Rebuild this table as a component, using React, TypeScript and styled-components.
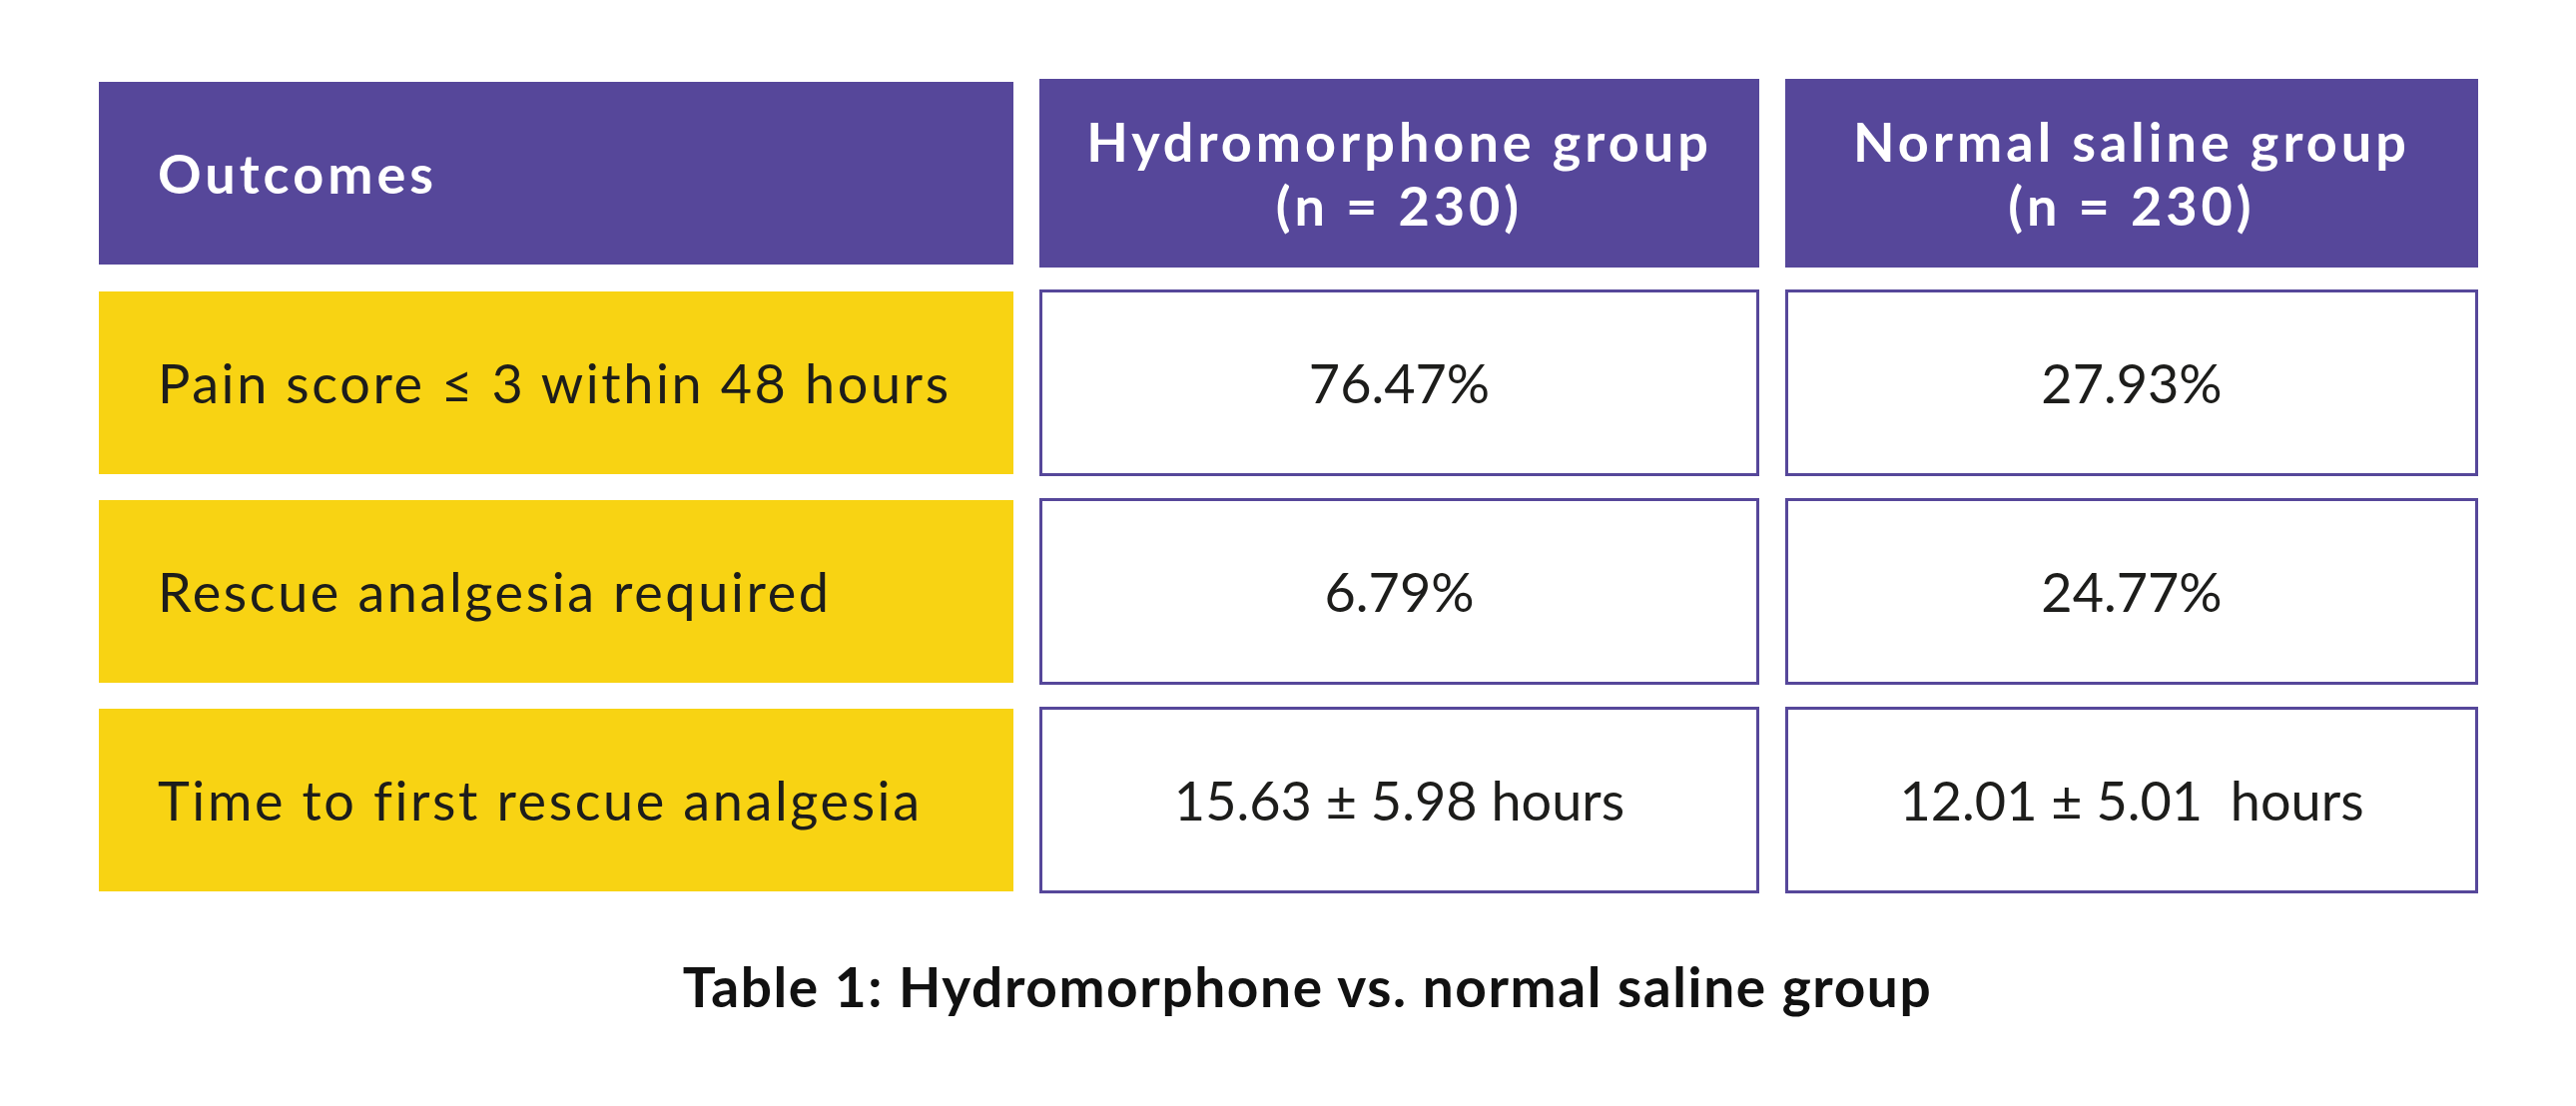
import React from 'react';
import styled, { createGlobalStyle } from 'styled-components';

const GlobalStyle = createGlobalStyle`
	html, body {
		margin: 0;
		padding: 0;
		background: #ffffff;
	}
	body {
		font-family: Lato, 'Noto Sans', 'Liberation Sans', sans-serif;
		color: #1d1d1b;
	}
`;

const PURPLE = '#56479a';
const YELLOW = '#f8d313';

const Page = styled.main`
	width: 2580px;
	height: 1108px;
	box-sizing: border-box;
	padding: 79px 0 0 99px;
	display: flex;
	flex-direction: column;
`;

const Grid = styled.section`
	display: grid;
	grid-template-columns: 916px 721px 694px;
	grid-template-rows: 189px repeat(3, 187px);
	column-gap: 26px;
	row-gap: 22px;
`;

const HeadCell = styled.div<{ $first?: boolean }>`
	background: ${PURPLE};
	color: #ffffff;
	font-weight: 700;
	font-size: 54px;
	line-height: 64px;
	letter-spacing: 4px;
	display: flex;
	align-items: center;
	justify-content: ${({ $first }) => ($first ? 'flex-start' : 'center')};
	text-align: ${({ $first }) => ($first ? 'left' : 'center')};
	padding-left: ${({ $first }) => ($first ? '59px' : '0')};
	margin: ${({ $first }) => ($first ? '3px 0' : '0')};
`;

const LabelCell = styled.div`
	background: ${YELLOW};
	margin: 2px 0;
	padding-left: 59px;
	display: flex;
	align-items: center;
	font-size: 54px;
	font-weight: 400;
	letter-spacing: 2.6px;
	color: #1d1d1b;
`;

const ValueCell = styled.div`
	box-sizing: border-box;
	border: 3px solid ${PURPLE};
	background: #ffffff;
	display: flex;
	align-items: center;
	justify-content: center;
	font-size: 54px;
	font-weight: 400;
	color: #1d1d1b;
	white-space: pre;
`;

const Caption = styled.p`
	margin: 60px 0 0;
	padding-left: 38px;
	width: 2345px;
	text-align: center;
	font-size: 55px;
	line-height: 66px;
	font-weight: 700;
	letter-spacing: 1.6px;
	color: #111111;
`;

const rows = [
	{ label: 'Pain score ≤ 3 within 48 hours', hydro: '76.47%', saline: '27.93%' },
	{ label: 'Rescue analgesia required', hydro: '6.79%', saline: '24.77%' },
	{ label: 'Time to first rescue analgesia', hydro: '15.63 ± 5.98 hours', saline: '12.01 ± 5.01  hours' },
];

export default function App() {
	return (
		<>
			<GlobalStyle />
			<Page>
				<Grid>
					<HeadCell $first>Outcomes</HeadCell>
					<HeadCell>
						Hydromorphone group
						<br />
						(n = 230)
					</HeadCell>
					<HeadCell>
						Normal saline group
						<br />
						(n = 230)
					</HeadCell>
					{rows.map((row) => (
						<React.Fragment key={row.label}>
							<LabelCell>{row.label}</LabelCell>
							<ValueCell>{row.hydro}</ValueCell>
							<ValueCell>{row.saline}</ValueCell>
						</React.Fragment>
					))}
				</Grid>
				<Caption>Table 1: Hydromorphone vs. normal saline group</Caption>
			</Page>
		</>
	);
}
